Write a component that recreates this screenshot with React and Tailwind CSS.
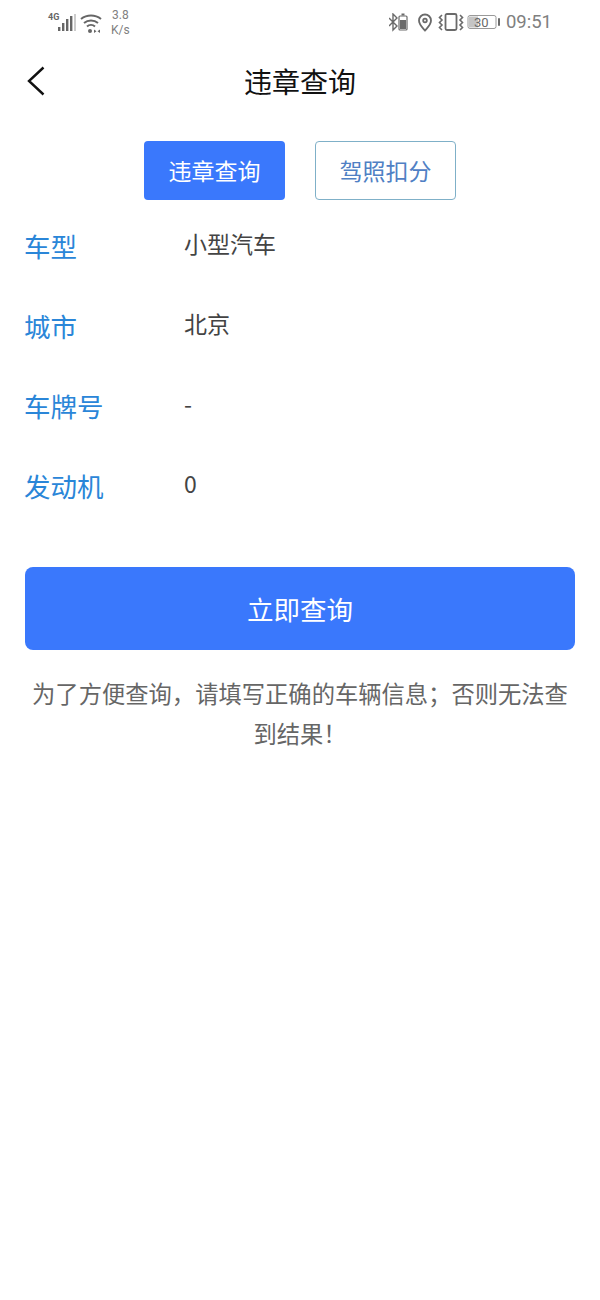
const cjk = { fontFamily: '"Noto Sans CJK SC", Roboto, sans-serif' };

function StatusBar() {
  return (
    <div className="h-[45px] flex items-start justify-between pl-[47px] pr-[48px] text-[#808080]">
      <div className="flex items-start">
        <svg width="64" height="26" viewBox="0 0 64 26" className="mt-[11px]" fill="#666">
          <text x="1" y="9" fontSize="9" fontWeight="700" fontFamily="Roboto">4G</text>
          <rect x="11" y="16" width="2.4" height="4" />
          <rect x="15" y="12" width="2.4" height="8" />
          <rect x="19" y="8" width="2.4" height="12" />
          <rect x="23" y="5" width="2.4" height="15" />
          <rect x="27" y="3" width="2" height="17" fill="#ccc" />
          <path d="M34 8a16 16 0 0 1 20 0M37 12a11 11 0 0 1 14 0M40 15.5a6 6 0 0 1 8 0" fill="none" stroke="#666" strokeWidth="2" />
          <circle cx="43" cy="20" r="2" />
          <path d="M47 18.5l2.5 1.8-2.5 1.8zM53 18.5l-2.5 1.8 2.5 1.8z" />
        </svg>
        <div className="mt-[8px] text-[12px] leading-[15px] text-center" style={{ fontFamily: 'Roboto, sans-serif' }}>
          <div>3.8</div>
          <div>K/s</div>
        </div>
      </div>
      <div className="flex items-start">
        <svg width="112" height="20" viewBox="0 0 112 20" className="mt-[13px]" fill="none" stroke="#6a6a6a" strokeWidth="1.8">
          <path d="M0 5l8 8-4 4V1l4 4-8 8" strokeWidth="1.4" />
          <rect x="10" y="3" width="8" height="14" rx="1" strokeWidth="1.2" />
          <rect x="12.5" y="0.5" width="3" height="2" fill="#6a6a6a" stroke="none" />
          <rect x="11" y="7" width="6" height="9" fill="#6a6a6a" stroke="none" />
          <path d="M36 17.5c-3-3.5-6-6-6-10a6 6 0 0 1 12 0c0 4-3 6.5-6 10z" />
          <circle cx="36" cy="7.5" r="1.8" />
          <rect x="56.5" y="1" width="11" height="16" rx="1.5" />
          <path d="M53 2l-2.5 2.5 2.5 2.5-2.5 2.5 2.5 2.5-2.5 2.5 2.5 2.5M71 2l2.5 2.5-2.5 2.5 2.5 2.5-2.5 2.5 2.5 2.5-2.5 2.5" strokeWidth="1.6" />
          <rect x="79" y="2.5" width="28" height="13" rx="2" strokeWidth="1" stroke="#999" />
          <rect x="80" y="3.5" width="9" height="11" fill="#c4c4c4" stroke="none" />
          <rect x="109" y="5" width="2" height="8" rx="1" fill="#6a6a6a" stroke="none" />
          <text x="85" y="13.5" fontSize="13" fill="#6a6a6a" stroke="none" fontFamily="Roboto">30</text>
        </svg>
        <span className="ml-[5px] mt-[11px] text-[18.5px] leading-[22px]" style={{ fontFamily: 'Roboto, sans-serif' }}>09:51</span>
      </div>
    </div>
  );
}

const rows = [
  ['车型', '小型汽车'],
  ['城市', '北京'],
  ['车牌号', '-'],
  ['发动机', '0'],
];

export default function App() {
  return (
    <div className="w-[600px] h-[1300px] bg-white overflow-hidden" style={cjk}>
      <StatusBar />
      <div className="relative h-[72px] flex items-center justify-center">
        <svg width="20" height="30" viewBox="0 0 20 30" className="absolute left-[26px] top-[21px]" fill="none" stroke="#111" strokeWidth="2.4">
          <path d="M17.5 1.5L3 15l14.5 13.5" />
        </svg>
        <span className="text-[28px] leading-[36px] text-[#111]">违章查询</span>
      </div>
      <div className="mt-[24px] flex justify-center gap-[30px]">
        <button className="w-[141px] h-[59px] rounded-[4px] bg-[#3a78fc] text-white text-[23px]">违章查询</button>
        <button className="w-[141px] h-[59px] rounded-[4px] bg-white border border-[#7fb0c8] text-[#4f80c4] text-[23px]">驾照扣分</button>
      </div>
      <div className="mt-[3px] px-[24px]">
        {rows.map(([label, value]) => (
          <div key={label} className="h-[80px] flex items-start pt-[23px]">
            <span className="mt-[2px] w-[160px] text-[26.5px] leading-[36px] text-[#2a86d8]">{label}</span>
            <span className="text-[23px] leading-[34px] text-[#444]">{value}</span>
          </div>
        ))}
      </div>
      <div className="mt-[44px] px-[25px]">
        <button className="w-full h-[83px] rounded-[8px] bg-[#3a78fc] text-white text-[26.5px]">立即查询</button>
        <p className="mt-[23px] text-center text-[23.3px] leading-[40px] text-[#666]">为了方便查询，请填写正确的车辆信息；否则无法查到结果！</p>
      </div>
    </div>
  );
}
